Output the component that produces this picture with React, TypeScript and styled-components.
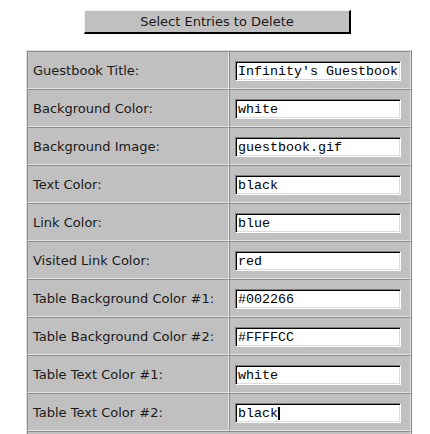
import styled, { createGlobalStyle } from "styled-components";

const settings = [
  { label: "Guestbook Title:", value: "Infinity's Guestbook" },
  { label: "Background Color:", value: "white" },
  { label: "Background Image:", value: "guestbook.gif" },
  { label: "Text Color:", value: "black" },
  { label: "Link Color:", value: "blue" },
  { label: "Visited Link Color:", value: "red" },
  { label: "Table Background Color #1:", value: "#002266" },
  { label: "Table Background Color #2:", value: "#FFFFCC" },
  { label: "Table Text Color #1:", value: "white" },
  { label: "Table Text Color #2:", value: "black", focused: true },
];

const GlobalStyle = createGlobalStyle`
  html, body {
    margin: 0;
    background: #fff;
    overflow: hidden;
    font-family: "DejaVu Sans", Verdana, sans-serif;
  }
`;

const Page = styled.div`
  padding-top: 10px;
`;

const ButtonRow = styled.div`
  padding-left: 84px;
`;

const DeleteButton = styled.button`
  box-sizing: border-box;
  width: 267px;
  height: 24px;
  background: #c0c0c0;
  border-style: solid;
  border-width: 1px 2px 2px 1px;
  border-color: #f0f0f0 #000 #000 #f0f0f0;
  font-family: "DejaVu Sans", Verdana, sans-serif;
  font-size: 13px;
  color: #1a1a1a;
  padding: 0;
`;

const Table = styled.table`
  margin: 16px 0 0 26px;
  width: 386px;
  border-collapse: separate;
  border-spacing: 0;
  background: #c0c0c0;
  border-style: solid;
  border-width: 1px;
  border-color: #dedede #808080 #808080 #dedede;
`;

const Cell = styled.td<{ $wide?: boolean }>`
  box-sizing: border-box;
  height: 38px;
  padding: 0 0 0 5px;
  width: ${(p) => (p.$wide ? "202px" : "auto")};
  border-style: solid;
  border-width: 1px;
  border-color: #8c8c8c #e4e4e4 #e4e4e4 #8c8c8c;
  font-size: 13px;
  color: #1a1a1a;
  vertical-align: middle;
`;

const ValueCell = styled(Cell)`
  padding: 2px 0 0 5px;
`;

const FieldWrap = styled.span`
  position: relative;
  display: inline-block;
`;

const Field = styled.input`
  box-sizing: border-box;
  width: 166px;
  height: 20px;
  margin: 0;
  padding: 0 0 0 2px;
  background: #fff;
  border-style: solid;
  border-width: 1px;
  border-color: #808080 #fff #fff #808080;
  box-shadow: inset 1px 1px 0 #000, inset -1px -1px 0 #dcdcdc;
  font-family: "Liberation Mono", "Courier New", monospace;
  font-size: 13.33px;
  color: #000;
  outline: none;
`;

const Caret = styled.span<{ $chars: number }>`
  position: absolute;
  top: 4px;
  left: ${(p) => 3 + p.$chars * 8}px;
  width: 2px;
  height: 13px;
  background: #000;
`;

export default function App() {
  return (
    <Page>
      <GlobalStyle />
      <ButtonRow>
        <DeleteButton type="button">Select Entries to Delete</DeleteButton>
      </ButtonRow>
      <Table>
        <tbody>
          {settings.map((s) => (
            <tr key={s.label}>
              <Cell $wide>{s.label}</Cell>
              <ValueCell>
                <FieldWrap>
                  <Field type="text" defaultValue={s.value} />
                  {s.focused && <Caret $chars={s.value.length} />}
                </FieldWrap>
              </ValueCell>
            </tr>
          ))}
          <tr>
            <Cell colSpan={2} />
          </tr>
        </tbody>
      </Table>
    </Page>
  );
}
